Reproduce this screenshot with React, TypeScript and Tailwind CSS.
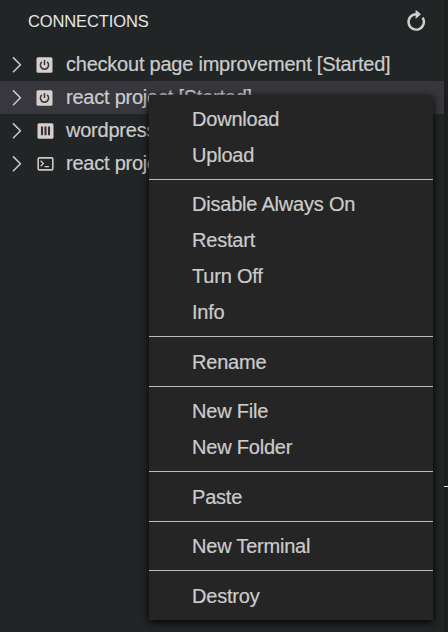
import React from "react";

type IconKind = "power" | "bars" | "terminal";

const rows: { icon: IconKind; label: string; selected?: boolean }[] = [
  { icon: "power", label: "checkout page improvement [Started]" },
  { icon: "power", label: "react project [Started]", selected: true },
  { icon: "bars", label: "wordpress" },
  { icon: "terminal", label: "react project" },
];

const groups: string[][] = [
  ["Download", "Upload"],
  ["Disable Always On", "Restart", "Turn Off", "Info"],
  ["Rename"],
  ["New File", "New Folder"],
  ["Paste"],
  ["New Terminal"],
  ["Destroy"],
];

function Chevron() {
  return (
    <svg className="ml-3 h-[18px] w-[10px] shrink-0" viewBox="0 0 10 18" fill="none" stroke="#cccccc" strokeWidth="1.5">
      <path d="M1 1.4 L8.4 8.8 L1 16.2" />
    </svg>
  );
}

function KindIcon({ kind }: { kind: IconKind }) {
  if (kind === "power") {
    return (
      <svg className="ml-[14px] mr-[13px] h-[17px] w-[17px] shrink-0" viewBox="0 0 17 17" fill="none">
        <rect x="0.5" y="1.2" width="16" height="15.6" rx="1.6" fill="#d8cecd" />
        <path d="M5.9 5.9 A4.1 4.1 0 1 0 11.1 5.9 M8.5 4 V9" stroke="#3a3838" strokeWidth="1.5" />
      </svg>
    );
  }
  if (kind === "bars") {
    return (
      <svg className="ml-[15px] mr-3 h-[17px] w-[17px] shrink-0" viewBox="0 0 17 17" fill="none">
        <rect x="0.5" y="1.2" width="16" height="15.6" rx="1.6" fill="#d8cecd" />
        <path d="M5 4.4 V13.2 M8.5 4.4 V13.2 M12 4.4 V13.2" stroke="#343232" strokeWidth="2.1" />
      </svg>
    );
  }
  return (
    <svg className="ml-[15px] mr-3 h-[17px] w-[17px] shrink-0" viewBox="0 0 17 17" fill="none">
      <rect x="1.2" y="2.9" width="14.6" height="12" rx="1.2" stroke="#d0c6c6" strokeWidth="1.6" />
      <path d="M3.6 5.8 L6.4 8.5 L3.6 11.2 M7.6 11.7 H12" stroke="#d0c6c6" strokeWidth="1.3" />
    </svg>
  );
}

function Refresh() {
  return (
    <svg className="h-[23px] w-[20px]" viewBox="0 0 20 23" fill="none">
      <path d="M10.4 5.2 A7.7 7.7 0 1 0 16.6 8.6" stroke="#cfcfcf" strokeWidth="2.4" />
      <path d="M9.6 0.8 L15 5.3 L9.6 10 Z" fill="#cfcfcf" />
    </svg>
  );
}

function ContextMenu() {
  return (
    <div className="absolute left-[149px] top-[95px] w-[284px] bg-[#252526] py-1.5 text-[20px] tracking-[-0.21px] text-[#cccccc] shadow-[0_2px_8px_#000000] [-webkit-text-stroke:0.2px]">
      {groups.map((group, i) => (
        <div key={group[0]}>
          {i > 0 && <div className="mt-1.5 mb-[6.45px] h-px bg-[#bbbbbb]" />}
          {group.map((item) => (
            <div key={item} className="h-9 pl-[43px] leading-9">
              {item}
            </div>
          ))}
        </div>
      ))}
    </div>
  );
}

export default function App() {
  return (
    <div className="relative flex h-[632px] w-[448px] overflow-hidden bg-[#1e1e1e] font-['Liberation_Sans',Arial,sans-serif]">
      <div className="w-[444px] bg-[#212526]">
        <div className="flex h-12 items-start justify-between pl-7 pr-[18px]">
          <span className="pt-[9px] text-[16.5px] leading-6 tracking-[-0.12px] text-[#e7e7e7]">CONNECTIONS</span>
          <div className="pt-[9px]">
            <Refresh />
          </div>
        </div>
        {rows.map((row, i) => (
          <div key={i} className={`flex h-[33px] items-center ${row.selected ? "bg-[#37373d]" : ""}`}>
            <Chevron />
            <KindIcon kind={row.icon} />
            <span className="whitespace-nowrap text-[20px] leading-[33px] tracking-[-0.23px] text-[#cccccc] [-webkit-text-stroke:0.2px]">
              {row.label}
            </span>
          </div>
        ))}
      </div>
      <div className="w-1 pt-[486px]">
        <div className="h-px bg-[#e7e7e7]" />
      </div>
      <ContextMenu />
    </div>
  );
}
